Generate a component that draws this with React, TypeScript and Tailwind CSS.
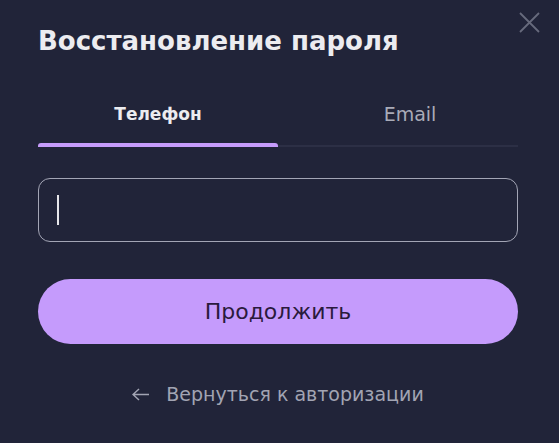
const font = { fontFamily: "'DejaVu Sans', sans-serif" };

const App = () => {
  return (
    <div
      className="relative w-[559px] h-[443px] bg-[#212439] overflow-hidden pl-[38px] pr-[41px] pt-[26px]"
      style={font}
    >
      <button className="absolute top-[12px] left-[519px] text-[#676a7c]">
        <svg width="21" height="21" viewBox="0 0 21 21" fill="none" stroke="currentColor" strokeWidth="1.8">
          <path d="M1 1L20 20M20 1L1 20" />
        </svg>
      </button>

      <h1 className="text-[26px] leading-[30px] font-bold text-[#ececf0]">
        Восстановление пароля
      </h1>

      <div className="mt-[46px] flex">
        <div className="flex-1 flex flex-col items-center">
          <span className="text-[17px] leading-[24px] font-bold text-[#ececf0]">
            Телефон
          </span>
          <div className="mt-[17px] w-full h-[4px] rounded-t-[3px] bg-[#c69cfb]" />
        </div>
        <div className="flex-1 flex flex-col items-center">
          <span className="pl-[24px] text-[19px] leading-[24px] text-[#a9abb8]">
            Email
          </span>
          <div className="mt-[19px] w-full h-[2px] bg-[#2c2f45]" />
        </div>
      </div>

      <div className="mt-[31px] h-[64px] rounded-[12px] border border-[#a3a5b5] flex items-center px-[18px]">
        <div className="w-[1.5px] h-[30px] bg-[#e6e6ea]" />
      </div>

      <button className="mt-[37px] w-full h-[65px] rounded-full bg-[#c59bfc] text-[#2a1a3c] text-[22px]">
        Продолжить
      </button>

      <div className="mt-[38px] flex items-center justify-center gap-[16px] text-[#a2a4b3]">
        <svg width="18" height="13" viewBox="0 0 18 13" fill="none" stroke="currentColor" strokeWidth="1.5">
          <path d="M1 6.5H17M7 1L1 6.5L7 12" />
        </svg>
        <span className="text-[19px] leading-[24px]">
          Вернуться к авторизации
        </span>
      </div>
    </div>
  );
};

export default App;
